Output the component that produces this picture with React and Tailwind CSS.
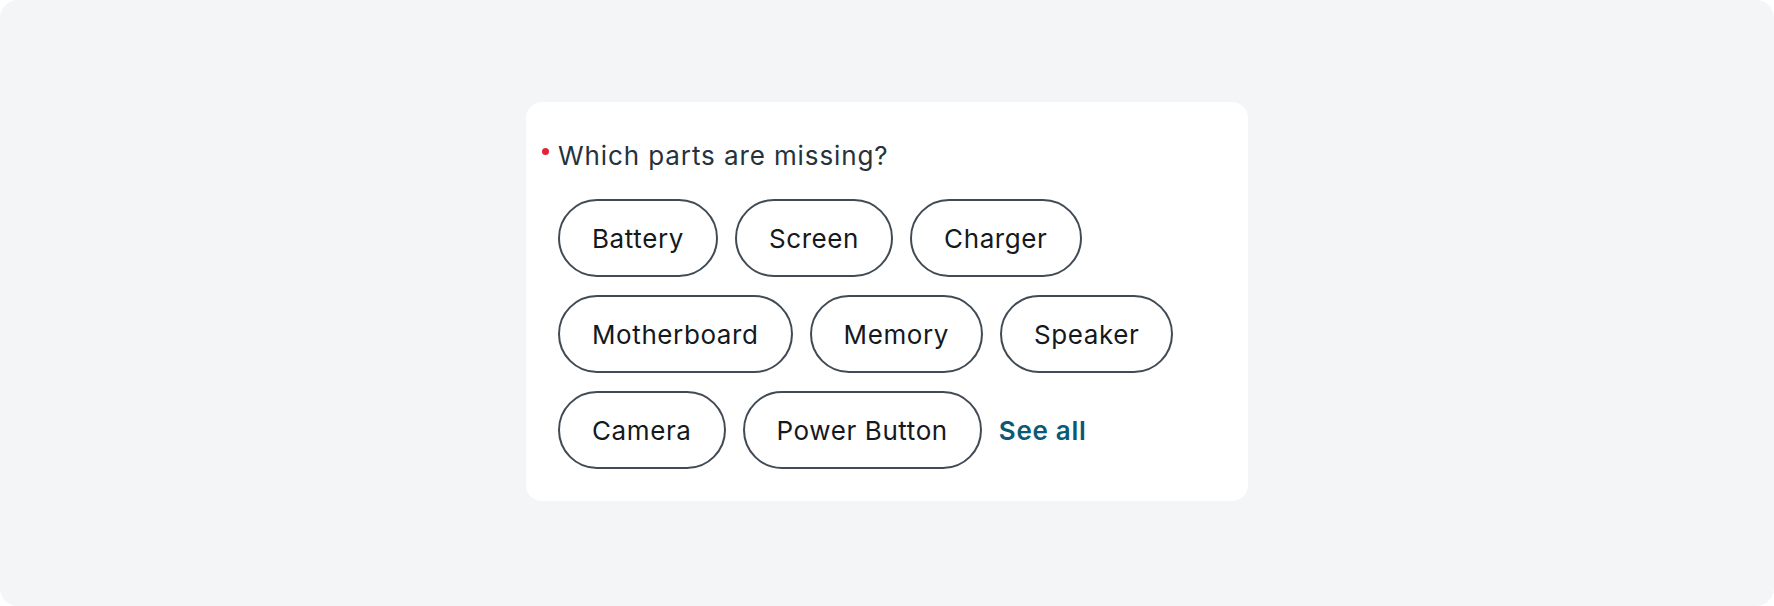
const parts = ['Battery', 'Screen', 'Charger', 'Motherboard', 'Memory', 'Speaker', 'Camera', 'Power Button'];

export default function App() {
  return (
    <div className="w-[1774px] h-[606px] bg-white" style={{ fontFamily: 'Inter, "Noto Sans", sans-serif' }}>
      <div className="w-full h-full bg-[#f4f5f7] rounded-[18px] flex justify-center pt-[102px]">
        <div className="w-[722px] h-[399px] bg-white rounded-2xl pl-8 pr-8 pt-[38px]">
          <div className="relative flex items-center h-8">
            <span className="absolute left-[-16px] top-[8px] w-[7px] h-[7px] rounded-full bg-[#e3243b]" />
            <span className="text-[26px] text-[#26323c] leading-8 tracking-[0.9px]">Which parts are missing?</span>
          </div>
          <div className="flex flex-wrap items-center gap-x-[17px] gap-y-[18px] mt-[27px]">
            {parts.map(p => (
              <button
                key={p}
                className="h-[78px] px-8 rounded-full border-2 border-[#404b55] text-[26px] tracking-[0.6px] text-[#14191e] bg-white"
              >
                {p}
              </button>
            ))}
            <a href="#" className="text-[26px] font-semibold tracking-[0.7px] text-[#0b5a74]">See all</a>
          </div>
        </div>
      </div>
    </div>
  );
}
